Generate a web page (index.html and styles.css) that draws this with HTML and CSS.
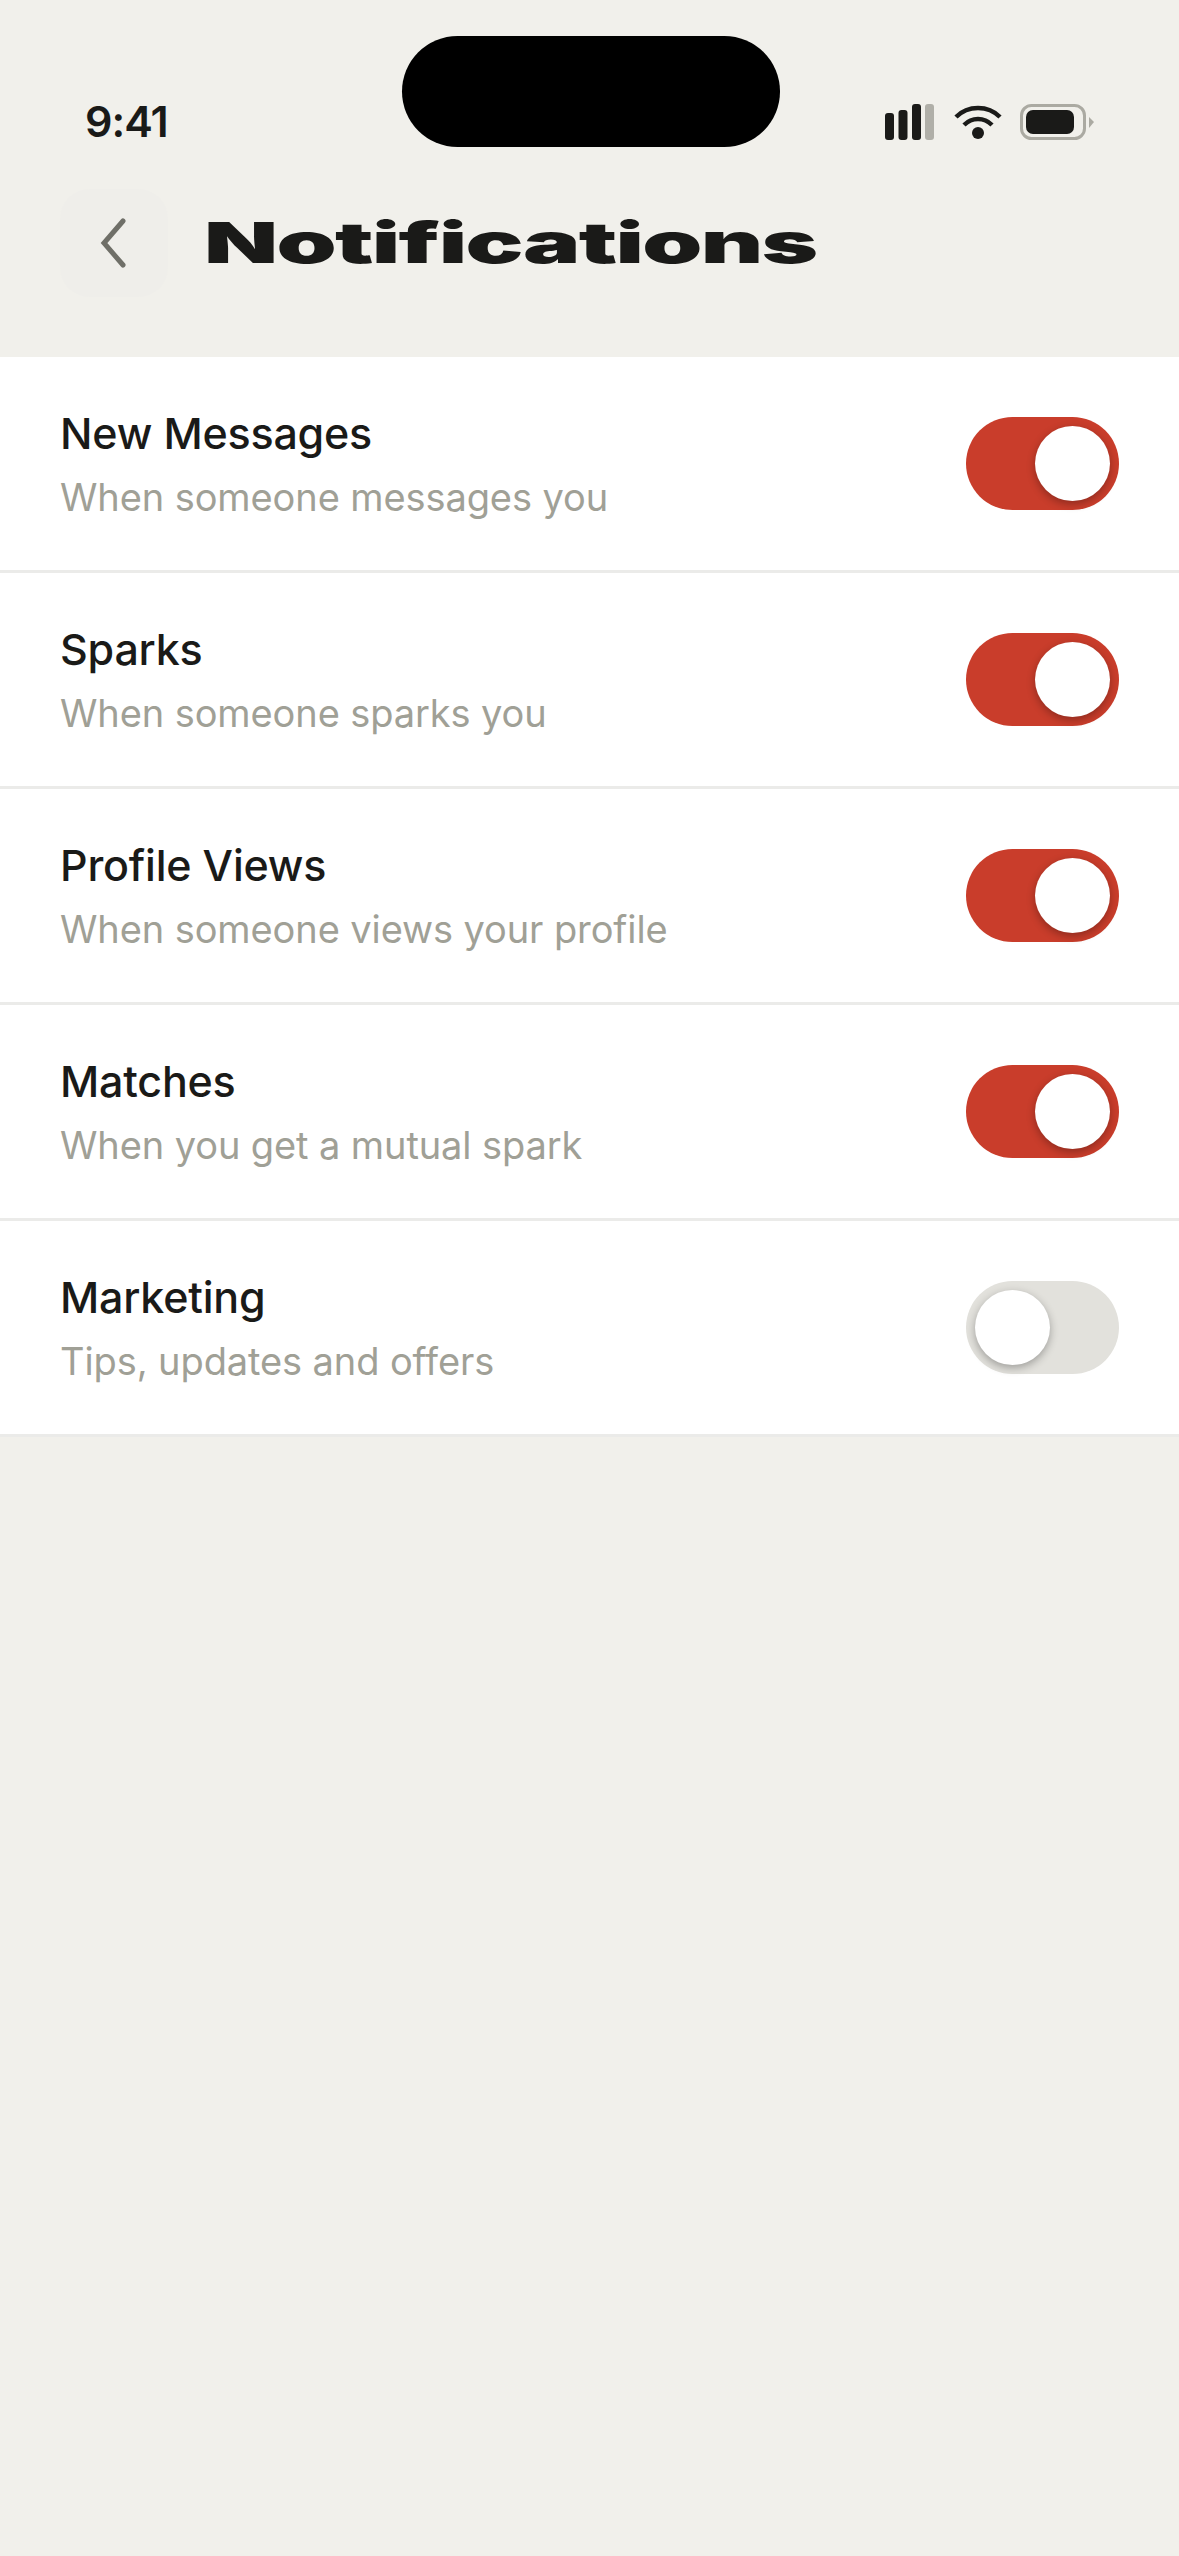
FILE: index.html
```html
<!DOCTYPE html>
<html lang="en">
<head>
    <meta charset="UTF-8">
    <meta name="viewport" content="width=device-width, initial-scale=1.0">
    <title>Notifications</title>
    <link rel="stylesheet" href="styles.css">
</head>
<body>
    <div class="island"></div>

    <div class="status-bar">
        <span class="time">9:41</span>
        <div class="status-icons">
            <svg class="signal" width="49" height="36" viewBox="0 0 49 36">
                <rect x="0" y="9" width="9" height="27" rx="3" fill="#1a1a18"/>
                <rect x="13.5" y="6" width="9" height="30" rx="3" fill="#1a1a18"/>
                <rect x="27" y="0" width="9" height="36" rx="3" fill="#1a1a18"/>
                <rect x="40" y="0" width="9" height="36" rx="3" fill="#b0afa8"/>
            </svg>
            <svg class="wifi" width="48" height="36" viewBox="0 0 48 36">
                <path d="M2 13 C14 1 34 1 46 13" fill="none" stroke="#1a1a18" stroke-width="4.5"/>
                <path d="M10 21 C18 13 30 13 38 21" fill="none" stroke="#1a1a18" stroke-width="4.5"/>
                <circle cx="24" cy="29" r="6" fill="#1a1a18"/>
            </svg>
            <svg class="battery" width="74" height="36" viewBox="0 0 74 36">
                <rect x="1.5" y="1.5" width="63" height="33" rx="10" fill="none" stroke="#abaaa2" stroke-width="3"/>
                <rect x="6" y="6" width="48" height="24" rx="7" fill="#1a1a18"/>
                <path d="M69 13 L74 18 L69 24 Z" fill="#abaaa2"/>
            </svg>
        </div>
    </div>

    <div class="header">
        <button class="back-btn">
            <svg width="26" height="50" viewBox="0 0 26 50">
                <path d="M23 3 L4 25 L23 47" fill="none" stroke="#6f6f68" stroke-width="5" stroke-linecap="round"/>
            </svg>
        </button>
        <h1 class="title">Notifications</h1>
    </div>

    <div class="list">
        <div class="row">
            <div class="row-text">
                <div class="row-name">New Messages</div>
                <div class="row-desc">When someone messages you</div>
            </div>
            <div class="toggle on"><div class="knob"></div></div>
        </div>
        <div class="row">
            <div class="row-text">
                <div class="row-name">Sparks</div>
                <div class="row-desc">When someone sparks you</div>
            </div>
            <div class="toggle on"><div class="knob"></div></div>
        </div>
        <div class="row">
            <div class="row-text">
                <div class="row-name">Profile Views</div>
                <div class="row-desc">When someone views your profile</div>
            </div>
            <div class="toggle on"><div class="knob"></div></div>
        </div>
        <div class="row">
            <div class="row-text">
                <div class="row-name">Matches</div>
                <div class="row-desc">When you get a mutual spark</div>
            </div>
            <div class="toggle on"><div class="knob"></div></div>
        </div>
        <div class="row">
            <div class="row-text">
                <div class="row-name">Marketing</div>
                <div class="row-desc">Tips, updates and offers</div>
            </div>
            <div class="toggle"><div class="knob"></div></div>
        </div>
    </div>
</body>
</html>
```

FILE: styles.css
```css
html, body {
    margin: 0;
    padding: 0;
}
body {
    width: 1179px;
    height: 2556px;
    overflow: hidden;
    background-color: #f1f0eb;
    color: #1a1a18;
    font-family: Inter, sans-serif;
    position: relative;
}
.island {
    position: absolute;
    left: 402px;
    top: 36px;
    width: 378px;
    height: 111px;
    background: #000;
    border-radius: 56px;
}
.status-bar {
    display: flex;
    justify-content: space-between;
    align-items: center;
    height: 36px;
    padding: 103px 85px 2px 85px;
}
.time {
    font-size: 43px;
    font-weight: 600;
    letter-spacing: -1px;
}
.status-icons {
    display: flex;
    align-items: center;
    gap: 20px;
    margin-top: 2px;
}
.status-icons svg {
    display: block;
}
.wifi {
    margin-right: -2px;
}
.header {
    display: flex;
    align-items: center;
    gap: 36px;
    padding: 48px 60px 60px 60px;
}
.back-btn {
    width: 108px;
    height: 108px;
    border: none;
    border-radius: 30px;
    background: #efeeea;
    padding: 0 2px 0 0;
    display: flex;
    align-items: center;
    justify-content: center;
}
.title {
    margin: 0;
    font-size: 56px;
    font-weight: 900;
    line-height: 108px;
    letter-spacing: -1px;
    transform: scaleX(1.72);
    transform-origin: left center;
}
.list {
    background: #fff;
}
.row {
    display: flex;
    justify-content: space-between;
    align-items: center;
    box-sizing: border-box;
    height: 216px;
    padding: 0 60px;
    border-bottom: 3px solid #ebebe9;
}
.row-name {
    font-size: 43px;
    font-weight: 500;
    line-height: 60px;
    letter-spacing: -0.2px;
}
.row-desc {
    font-size: 38px;
    color: #a0a096;
    line-height: 54px;
    margin-top: 7px;
    letter-spacing: -0.1px;
}
.toggle {
    width: 153px;
    height: 93px;
    border-radius: 47px;
    background: #e2e1dc;
    padding: 9px;
    box-sizing: border-box;
    display: flex;
    justify-content: flex-start;
}
.toggle.on {
    background: #c93d2b;
    justify-content: flex-end;
}
.knob {
    width: 75px;
    height: 75px;
    border-radius: 50%;
    background: #fff;
    box-shadow: 0 3px 9px rgba(0, 0, 0, 0.3);
}
```
